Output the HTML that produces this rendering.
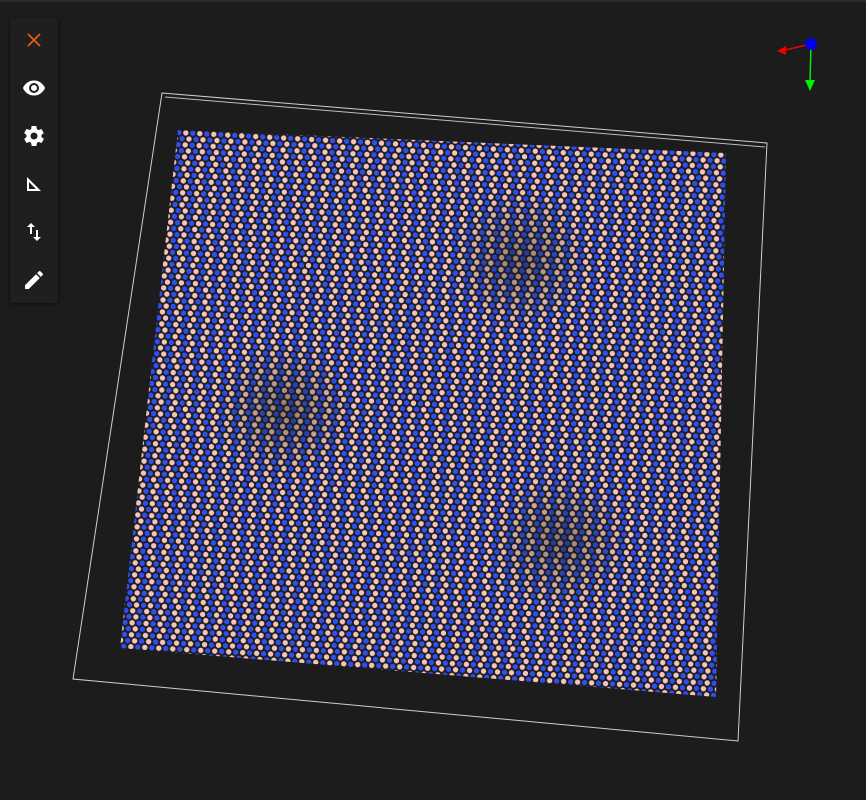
<!DOCTYPE html>
<html><head><style>
body{margin:0;width:866px;height:800px;background:#1c1c1c;overflow:hidden;position:relative;font-family:"Liberation Sans",sans-serif}
.top{position:absolute;left:0;top:0;width:866px;height:2px;background:#2c2c2c}
.tb{position:absolute;left:10px;top:18px;width:48px;height:285px;background:#1f1f1f;border-radius:3px;box-shadow:0 1px 4px rgba(0,0,0,.6)}
.tb svg{position:absolute;left:12px}
</style></head><body>
<div class="top"></div>
<svg width="866" height="800" style="position:absolute;left:0;top:0">
<defs>
<pattern id="p" width="14" height="12" patternUnits="userSpaceOnUse" patternTransform="rotate(3)">
<circle cx="3.5" cy="3" r="2.7" fill="#2f4ff0"/>
<circle cx="10.5" cy="3" r="2.7" fill="#f6c4bc"/>
<circle cx="0" cy="9" r="2.7" fill="#f6c4bc"/>
<circle cx="7" cy="9" r="2.7" fill="#2f4ff0"/>
<circle cx="14" cy="9" r="2.7" fill="#f6c4bc"/>
</pattern>
<radialGradient id="g"><stop offset="0" stop-color="#1c1c1c" stop-opacity=".45"/><stop offset="1" stop-color="#1c1c1c" stop-opacity="0"/></radialGradient>
<clipPath id="c"><polygon points="178,130 726,153 716,697 120,648"/></clipPath>
</defs>
<polygon points="162,93 767,143 738,741 73,679" fill="none" stroke="#cfcfcf" stroke-width="1"/>
<polyline points="165,97 765,147" fill="none" stroke="#bdbdbd" stroke-width="1"/>
<g clip-path="url(#c)">
<rect x="100" y="120" width="640" height="600" fill="url(#p)"/>
<circle cx="520" cy="260" r="70" fill="url(#g)"/>
<circle cx="285" cy="410" r="70" fill="url(#g)"/>
<circle cx="560" cy="540" r="70" fill="url(#g)"/>
</g>
<line x1="811" y1="44" x2="785" y2="50" stroke="#e00" stroke-width="1.5"/>
<polygon points="777,51 786,46 786,55" fill="#e00"/>
<line x1="811" y1="44" x2="810" y2="82" stroke="#0e0" stroke-width="1.5"/>
<polygon points="810,91 805,80 815,80" fill="#0e0"/>
<circle cx="811" cy="44" r="6" fill="#0000ee"/>
</svg>
<div class="tb">
<svg style="top:10px" width="24" height="24" viewBox="0 0 24 24"><path d="M6 6L18 18M18 6L6 18" stroke="#e06010" stroke-width="1.8"/></svg>
<svg style="top:58px" width="24" height="24" viewBox="0 0 24 24"><path fill="#fff" d="M12 4.5C7 4.5 2.7 7.6 1 12c1.7 4.4 6 7.5 11 7.5s9.3-3.1 11-7.5c-1.7-4.4-6-7.5-11-7.5zM12 17a5 5 0 110-10 5 5 0 010 10zm0-8a3 3 0 100 6 3 3 0 000-6z"/></svg>
<svg style="top:106px" width="24" height="24" viewBox="0 0 24 24"><path fill="#fff" d="M19.4 13c.04-.3.06-.65.06-1s-.02-.7-.07-1l2.1-1.6c.2-.15.24-.42.12-.64l-2-3.46c-.12-.22-.39-.3-.61-.22l-2.5 1c-.52-.4-1.080-.73-1.7-.98l-.38-2.65C14.46 2.2 14.25 2 14 2h-4c-.25 0-.46.18-.5.42l-.37 2.65c-.62.25-1.18.58-1.7.98l-2.5-1c-.22-.08-.49 0-.61.22l-2 3.46c-.13.22-.07.49.12.64L4.57 11c-.04.3-.07.65-.07 1s.02.7.07 1l-2.1 1.6c-.2.15-.25.42-.12.64l2 3.46c.12.22.39.3.61.22l2.5-1c.52.4 1.080.73 1.7.98l.37 2.650c.04.24.25.42.5.42h4c.25 0 .46-.18.5-.42l.37-2.65c.62-.25 1.18-.58 1.7-.98l2.5 1c.22.08.49 0 .61-.22l2-3.46c.12-.22.07-.49-.12-.64L19.4 13zM12 15.5a3.5 3.5 0 110-7 3.5 3.5 0 010 7z"/></svg>
<svg style="top:154px" width="24" height="24" viewBox="0 0 24 24"><path fill="#fff" d="M5 5v14h14L5 5zm2 5l7 7H7v-7z"/></svg>
<svg style="top:202px" width="24" height="24" viewBox="0 0 24 24"><path fill="#fff" d="M9 3L5 7h3v7h2V7h3L9 3zm7 14v-7h-2v7h-3l4 4 4-4h-3z"/></svg>
<svg style="top:250px" width="24" height="24" viewBox="0 0 24 24"><path fill="#fff" d="M3 17.25V21h3.75L17.8 9.94l-3.75-3.75L3 17.25zM20.7 7.04a1 1 0 000-1.41l-2.34-2.34a1 1 0 00-1.41 0l-1.83 1.83 3.75 3.75 1.83-1.83z"/></svg>
</div>
</body></html>
